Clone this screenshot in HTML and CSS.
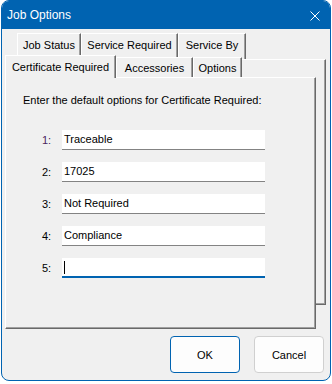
FILE: index.html
```html
<!DOCTYPE html>
<html lang="en">

<head>
    <meta charset="UTF-8">
    <meta name="viewport" content="width=device-width, initial-scale=1.0">
    <title>Job Options</title>
    <link rel="stylesheet" href="styles.css">
</head>

<body>
    <div class="window">
        <div class="titlebar">
            <span class="title">Job Options</span>
            <svg class="close" width="10" height="10" viewBox="0 0 10 10">
                <path d="M0.5 0.5 L9.5 9.5 M9.5 0.5 L0.5 9.5" stroke="#fff" stroke-width="1" fill="none" />
            </svg>
        </div>
        <div class="client">
            <div class="tabstack">
                <div class="layer back">
                    <div class="tabrow">
                        <div class="tab t-status">Job Status</div>
                        <div class="tab t-service">Service Required</div>
                        <div class="tab t-by">Service By</div>
                    </div>
                    <div class="panel"></div>
                </div>
                <div class="layer front">
                    <div class="tabrow">
                        <div class="tab selected t-cert">Certificate Required</div>
                        <div class="tab t-acc">Accessories</div>
                        <div class="tab t-opt">Options</div>
                    </div>
                    <div class="panel">
                        <p class="intro">Enter the default options for Certificate Required:</p>
                        <div class="rows">
                            <div class="row">
                                <span class="num first">1:</span>
                                <div class="field">Traceable</div>
                            </div>
                            <div class="row">
                                <span class="num">2:</span>
                                <div class="field">17025</div>
                            </div>
                            <div class="row">
                                <span class="num">3:</span>
                                <div class="field">Not Required</div>
                            </div>
                            <div class="row">
                                <span class="num">4:</span>
                                <div class="field">Compliance</div>
                            </div>
                            <div class="row">
                                <span class="num">5:</span>
                                <div class="field focused"><span class="caret"></span></div>
                            </div>
                        </div>
                    </div>
                </div>
            </div>
            <div class="buttons">
                <button class="btn default">OK</button>
                <button class="btn">Cancel</button>
            </div>
        </div>
    </div>
</body>

</html>
```

FILE: styles.css
```css
body {
    margin: 0;
    background-color: #ffffff;
    font-family: "Liberation Sans", Arial, sans-serif;
    font-size: 11px;
    color: #000;
}

.window {
    width: 330px;
    height: 381px;
    margin-left: 1px;
    box-sizing: border-box;
    border: 1px solid #0063b1;
    border-radius: 8px;
    overflow: hidden;
    background-color: #f0f0f0;
    display: flex;
    flex-direction: column;
}

.titlebar {
    height: 28px;
    flex: none;
    background-color: #0063b1; /* accent blue */
    color: #fff;
    display: flex;
    align-items: center;
    justify-content: space-between;
    padding: 0 10px 0 5px;
    font-size: 12px;
}

.close {
    display: block;
    margin-top: 2px;
}

.client {
    flex: 1;
    display: flex;
    flex-direction: column;
}

/* two tab rows drawn as two stacked tab controls */
.tabstack {
    display: grid;
    height: 300px;
}

.layer {
    grid-area: 1 / 1;
    display: flex;
    flex-direction: column;
}

.back {
    margin: 4px 4px 24px 15px;
}

.front {
    margin: 26px 14px 0 3px;
}

.tabrow {
    display: flex;
    align-items: flex-start;
    flex: none;
}

.tab {
    box-sizing: border-box;
    background-color: #f0f0f0;
    border-top: 1px solid #fff;
    border-left: 1px solid #fff;
    border-right: 1px solid #696969;
    box-shadow: inset -1px 0 0 #a0a0a0;
    text-align: center;
    white-space: nowrap;
}

.back .tab {
    height: 26px;
    padding-top: 5px;
}

.front .tab {
    height: 20px;
    margin-top: 2px;
    padding-top: 4px;
}

.front .tab.selected {
    height: 23px;
    margin-top: 0;
    margin-bottom: -1px;
    padding-top: 5px;
    position: relative;
    z-index: 1;
}

.t-status { width: 64px; }
.t-service { width: 97px; }
.t-by { width: 68px; }
.t-cert { width: 111px; }
.t-acc { width: 77px; }
.t-opt { width: 49px; }

.panel {
    flex: 1;
    box-sizing: border-box;
    background-color: #f0f0f0;
    border-top: 1px solid #fff;
    border-left: 1px solid #fff;
    border-right: 1px solid #696969;
    border-bottom: 1px solid #696969;
    box-shadow: inset -1px -1px 0 #a0a0a0;
}

.front .panel {
    padding: 16px 0 0 17px;
}

.intro {
    margin: 0;
    line-height: 13px;
}

.rows {
    margin-top: 23px;
    display: flex;
    flex-direction: column;
    gap: 12px;
}

.row {
    display: flex;
    align-items: center;
}

.num {
    width: 20px;
    margin-left: 19px;
}

.num.first {
    color: #4a1f5e;
}

.field {
    width: 203px;
    height: 20px;
    box-sizing: border-box;
    background-color: #fff;
    border-bottom: 1px solid #838383;
    padding: 0 2px;
    line-height: 19px;
    display: flex;
    align-items: center;
}

.field.focused {
    border-bottom: 2px solid #0063b1;
}

.caret {
    width: 1px;
    height: 13px;
    background-color: #000;
}

.buttons {
    display: flex;
    justify-content: flex-end;
    gap: 14px;
    padding: 7px 6px 0 0;
}

.btn {
    width: 70px;
    height: 37px;
    box-sizing: border-box;
    border: 1px solid #d0d0d0;
    border-radius: 4px;
    background-color: #fdfdfd;
    font-family: "Liberation Sans", Arial, sans-serif;
    font-size: 11px;
    color: #000;
    padding: 0;
}

.btn.default {
    border-color: #0063b1;
}
```
